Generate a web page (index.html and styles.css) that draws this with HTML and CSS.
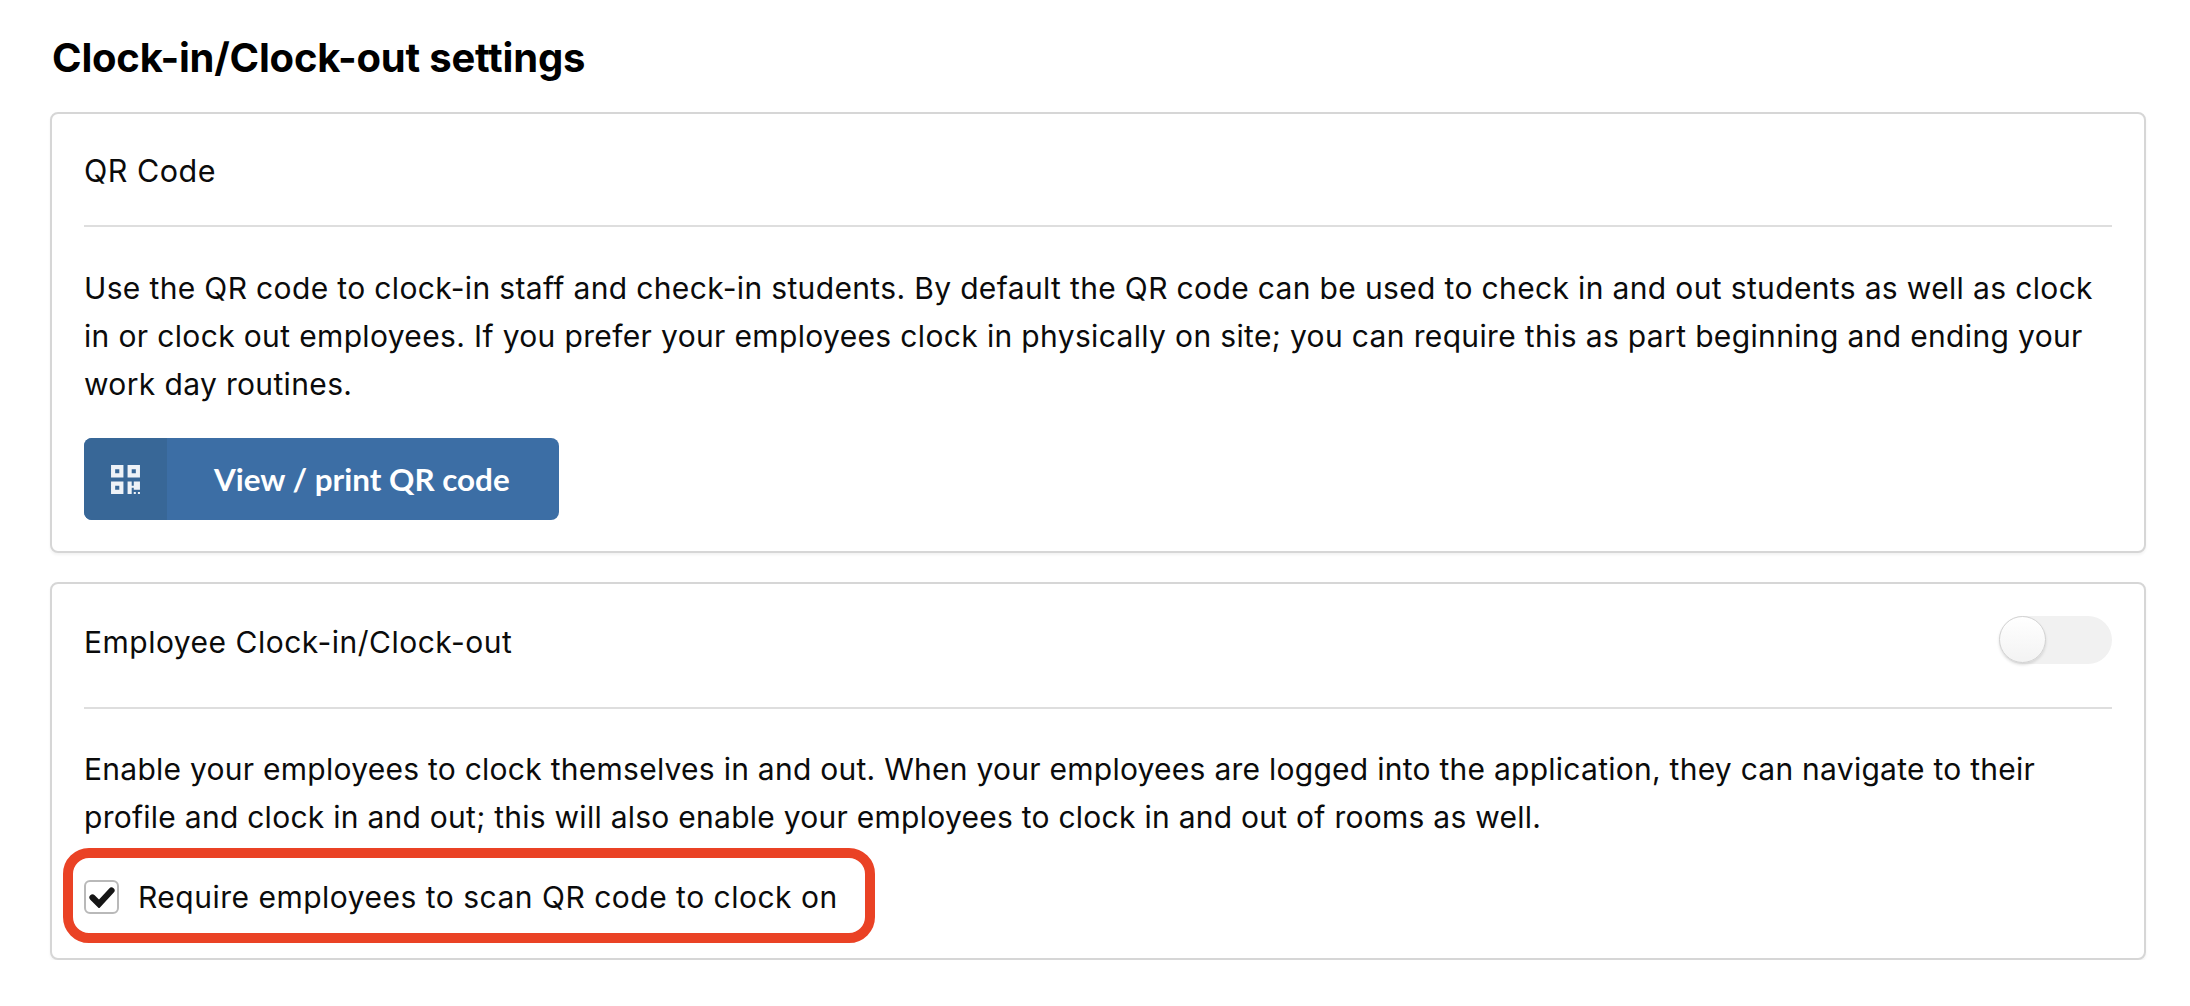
FILE: index.html
```html
<!DOCTYPE html>
<html lang="en">
<head>
<meta charset="utf-8">
<title>Clock-in/Clock-out settings</title>
<link rel="stylesheet" href="styles.css">
</head>
<body>
<main class="page">
  <h1 class="title">Clock-in/Clock-out settings</h1>
  <section class="card">
    <header class="card-head"><h2 class="card-title">QR Code</h2></header>
    <p class="copy copy-wide">Use the QR code to clock-in staff and check-in students. By default the QR code can be used to check in and out students as well as clock in or clock out employees. If you prefer your employees clock in physically on site; you can require this as part beginning and ending your work day routines.</p>
    <button class="btn" type="button">
      <span class="btn-icon">
        <svg width="31" height="31" viewBox="0 0 30 30" fill="#eef2f7" aria-hidden="true">
          <path fill-rule="evenodd" d="M1 1h12v12H1zM5 5v4h4V5zM17 1h12v12H17zM21 5v4h4V5zM1 17h12v12H1zM5 21v4h4v-4z"/>
          <path d="M17 17h4v4h2v-4h6v8h-6v-2h-2v6h-4zM23 27h2v2h-2zM27 27h2v2h-2z"/>
        </svg>
      </span>
      <span class="btn-label">View / print QR code</span>
    </button>
  </section>
  <section class="card card-second">
    <header class="card-head card-head-split">
      <h2 class="card-title">Employee Clock-in/Clock-out</h2>
      <span class="toggle"><span class="knob"></span></span>
    </header>
    <p class="copy copy-tight">Enable your employees to clock themselves in and out. When your employees are logged into the application, they can navigate to their profile and clock in and out; this will also enable your employees to clock in and out of rooms as well.</p>
    <label class="check-row">
      <span class="box">
        <svg width="26" height="22" viewBox="0 0 26 22" aria-hidden="true"><path d="M3.5 11.5l6.5 6.5L22.5 4.5" fill="none" stroke="#151515" stroke-width="6.2" stroke-linecap="round" stroke-linejoin="miter"/></svg>
      </span>
      <span class="check-label">Require employees to scan QR code to clock on</span>
      <span class="ring"></span>
    </label>
  </section>
</main>
</body>
</html>
```
FILE: styles.css
```css
* { box-sizing: border-box; }
html, body { margin: 0; background: #fff; }
body { font-family: Inter, "Noto Sans", sans-serif; color: #0b0b0b; }
.page { padding: 34px 44px 0 50px; }
.title { margin: 0 0 30px 2px; font-size: 40px; line-height: 48px; font-weight: 700; letter-spacing: -0.2px; color: #000; }
.card { border: 2px solid #d6d6d6; border-radius: 8px; padding: 0 32px 31px; box-shadow: 0 2px 3px rgba(0,0,0,.05); background: #fff; }
.card-second { margin-top: 29px; padding-bottom: 14px; }
.card-head { height: 113px; padding-top: 2px; display: flex; align-items: center; border-bottom: 2px solid #dedede; }
.card-head-split { justify-content: space-between; align-items: flex-start; height: 125px; padding-top: 32px; }
.card-title { margin: 0; font-size: 30.5px; line-height: 48px; font-weight: 400; letter-spacing: 0.5px; }
.card-head-split .card-title { margin-top: 2px; font-size: 30px; }
.copy { margin: 37px 0 0; font-size: 30px; line-height: 48px; letter-spacing: 0.26px; }
.copy-wide { letter-spacing: 0.35px; }
.copy-tight { margin-top: 36px; }
.btn { display: flex; width: 475px; height: 82px; margin-top: 30px; padding: 0; border: 0; border-radius: 8px; overflow: hidden; background: #3c6ea5; color: #fff; font-family: Lato, sans-serif; font-size: 31.4px; font-weight: 700; }
.btn-icon { width: 83px; height: 100%; display: flex; align-items: center; justify-content: center; background: #386797; }
.btn-label { flex: 1; align-self: center; text-align: left; padding-left: 47px; }
.toggle { width: 113px; height: 48px; border-radius: 24px; background: #f1f1f1; display: block; }
.knob { display: block; width: 47px; height: 47px; border-radius: 50%; background: linear-gradient(#fff, #f3f3f3); border: 1.5px solid #d2d2d2; box-shadow: 0 2px 3px rgba(0,0,0,.12); }
.check-row { position: relative; display: flex; align-items: center; gap: 19px; height: 34px; margin-top: 39px; margin-bottom: 30px; }
.box { width: 35px; height: 34px; display: flex; align-items: center; justify-content: center; border: 2px solid #b9b9b9; border-radius: 6px; background: #fff; }
.check-label { font-size: 30px; letter-spacing: 0.5px; }
.ring { position: absolute; left: -21px; top: -32px; width: 812px; height: 95px; border: 10px solid #ea4225; border-radius: 26px; }
```
